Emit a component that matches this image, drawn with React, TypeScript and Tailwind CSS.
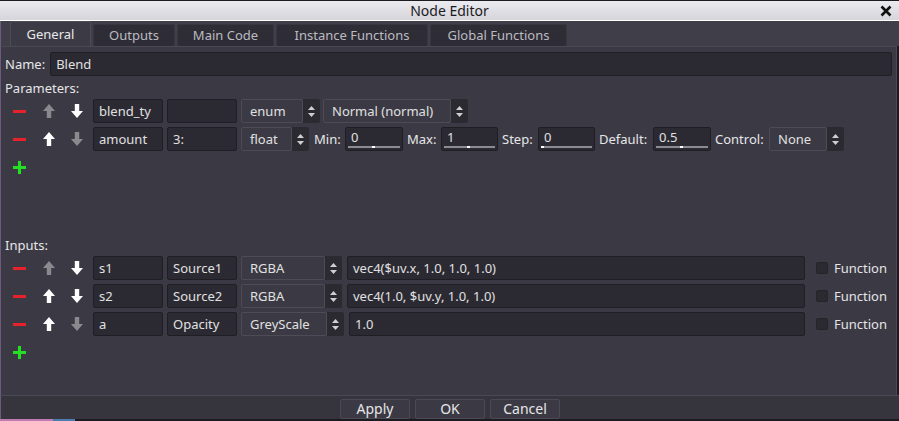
import React from 'react'

const FONT = { fontFamily: '"Noto Sans", "Open Sans", sans-serif' }

function Minus() {
  return (
    <div className="w-[28px] h-[24px] flex items-center justify-center">
      <div className="w-[13px] h-[3px] bg-[#e8222b]" />
    </div>
  )
}

function Plus() {
  return (
    <div className="w-[28px] h-[24px] flex items-center justify-center">
      <svg width="13" height="13" viewBox="0 0 13 13">
        <path d="M5 0h3v5h5v3H8v5H5V8H0V5h5z" fill="#22e022" />
      </svg>
    </div>
  )
}

function Arrow({ down, enabled }: { down?: boolean; enabled: boolean }) {
  return (
    <div className="w-[24px] h-[24px] flex items-center justify-center">
      <svg width="12" height="14" viewBox="0 0 12 14" style={{ transform: down ? 'rotate(180deg)' : undefined }}>
        <path d="M6 0L12 7H8.2V14H3.8V7H0Z" fill={enabled ? '#ffffff' : '#8a8a8e'} />
      </svg>
    </div>
  )
}

function Field({ w, children, grow }: { w?: number; children?: React.ReactNode; grow?: boolean }) {
  return (
    <div
      className={
        'h-[24px] bg-[#2b2a32] border border-[#1f1e25] rounded-[2px] pl-[5px] flex items-center text-[#e0e0e0] whitespace-nowrap overflow-hidden ' +
        (grow ? 'flex-1' : '')
      }
      style={w ? { width: w } : undefined}
    >
      {children}
    </div>
  )
}

function SpinIcon() {
  return (
    <svg width="7" height="11" viewBox="0 0 7 11">
      <path d="M3.5 0L7 4H0Z M0 7H7L3.5 11Z" fill="#cfcfd3" />
    </svg>
  )
}

function Select({ w, label, className }: { w: number; label: string; className?: string }) {
  return (
    <div className={'h-[24px] flex shrink-0 ' + (className ?? '')} style={{ width: w }}>
      <div className="flex-1 bg-[#3b3a44] border border-[#4d4c56] rounded-[2px] pl-[8px] flex items-center text-[#e0e0e0] whitespace-nowrap overflow-hidden">
        {label}
      </div>
      <div className="w-[17px] bg-[#2b2a31] rounded-r-[2px] flex items-center justify-center">
        <SpinIcon />
      </div>
    </div>
  )
}

function Spin({ w, value, tick }: { w: number; value: string; tick: number }) {
  return (
    <div
      className="relative h-[24px] shrink-0 bg-[#2b2a32] border border-[#1f1e25] rounded-[2px] pl-[5px] flex items-center text-[#e0e0e0]"
      style={{ width: w }}
    >
      <span className="-mt-[3px]">{value}</span>
      <div className="absolute left-[2px] right-[2px] bottom-[2px] h-[2px] bg-[#8c8b92]">
        <div className="absolute top-0 h-[2px] w-[3px] bg-white" style={{ left: `${tick}%` }} />
      </div>
    </div>
  )
}

function Label({ w, children }: { w: number; children: React.ReactNode }) {
  return (
    <span className="shrink-0 whitespace-nowrap" style={{ width: w }}>
      {children}
    </span>
  )
}

function Check() {
  return (
    <div className="flex items-center pl-[7px] pr-[5px]">
      <div className="w-[12px] h-[12px] bg-[#2b2a31] border border-[#25242b] rounded-[2px]" />
      <span className="ml-[6px] text-[#e4e4e4]">Function</span>
    </div>
  )
}

const TABS = [
  { name: 'General', w: 81 },
  { name: 'Outputs', w: 82 },
  { name: 'Main Code', w: 97 },
  { name: 'Instance Functions', w: 152 },
  { name: 'Global Functions', w: 137 },
]

const INPUTS = [
  { name: 's1', label: 'Source1', type: 'RGBA', sw: 101, expr: 'vec4($uv.x, 1.0, 1.0, 1.0)', up: false, down: true },
  { name: 's2', label: 'Source2', type: 'RGBA', sw: 101, expr: 'vec4(1.0, $uv.y, 1.0, 1.0)', up: true, down: true },
  { name: 'a', label: 'Opacity', type: 'GreyScale', sw: 103, expr: '1.0', up: true, down: false },
]

export default function App() {
  return (
    <div className="w-[899px] h-[421px] bg-[#1c1b22] flex flex-col overflow-hidden text-[13px] leading-none" style={FONT}>
      {/* title bar */}
      <div className="h-[20px] mt-[1px] bg-gradient-to-b from-[#ebeaef] to-[#d6d5db] border-b border-white flex items-center relative">
        <div className="flex-1 text-center text-[#1a1a1e] text-[14px]">Node Editor</div>
        <svg className="absolute right-[7px] top-[4px]" width="12" height="12" viewBox="0 0 12 12">
          <path d="M1.5 1.5L10.5 10.5M10.5 1.5L1.5 10.5" stroke="#111" strokeWidth="2.6" />
        </svg>
      </div>

      {/* tab bar */}
      <div className="h-[25px] bg-[#403f49] flex items-end pl-[9px] gap-[2px] border-l border-[#6e5a7e]">
        {TABS.map((t, i) =>
          i === 0 ? (
            <div
              key={t.name}
              className="h-[25px] bg-[#3c3b45] border border-b-0 border-[#4d4c56] rounded-t-[2px] flex items-center justify-center text-[#e8e8ea]"
              style={{ width: t.w }}
            >
              {t.name}
            </div>
          ) : (
            <div
              key={t.name}
              className="h-[22px] bg-[#2e2d35] border border-b-0 border-[#38373f] rounded-t-[2px] flex items-center justify-center text-[#bcbbc2]"
              style={{ width: t.w }}
            >
              {t.name}
            </div>
          )
        )}
      </div>

      {/* panel */}
      <div className="h-[349px] bg-[#3b3a44] border-t border-r border-[#4a4953] border-l border-l-[#6e5a7e] mr-[2px] pl-[4px] pr-[4px] pt-[5px] flex flex-col text-[#e6e6e8]">
        <div className="flex items-center gap-[5px]">
          <span>Name:</span>
          <Field grow>Blend</Field>
        </div>

        <div className="h-[16px] mt-[4px] flex items-center">Parameters:</div>

        <div className="mt-[3px] flex flex-col gap-[4px]">
          <div className="flex items-center gap-[4px]">
            <Minus />
            <Arrow enabled={false} />
            <Arrow down enabled />
            <Field w={70}>blend_ty</Field>
            <Field w={70} />
            <Select w={79} label="enum" />
            <Select w={145} label="Normal (normal)" className="-ml-[1px]" />
          </div>
          <div className="flex items-center gap-[4px]">
            <Minus />
            <Arrow enabled />
            <Arrow down enabled={false} />
            <Field w={70}>amount</Field>
            <Field w={70}>3:</Field>
            <Select w={68} label="float" />
            <Label w={28}>
              <span className="ml-[1px]">Min:</span>
            </Label>
            <Spin w={58} value="0" tick={46} />
            <Label w={30}>Max:</Label>
            <Spin w={57} value="1" tick={46} />
            <Label w={32}>Step:</Label>
            <Spin w={57} value="0" tick={0} />
            <Label w={50}>Default:</Label>
            <Spin w={58} value="0.5" tick={46} />
            <Label w={50}>Control:</Label>
            <Select w={75} label="None" />
          </div>
          <div className="flex items-center">
            <Plus />
          </div>
        </div>

        <div className="h-[16px] mt-[58px] flex items-center">Inputs:</div>

        <div className="mt-[3px] flex flex-col gap-[4px]">
          {INPUTS.map((r) => (
            <div key={r.name} className="flex items-center gap-[4px]">
              <Minus />
              <Arrow enabled={r.up} />
              <Arrow down enabled={r.down} />
              <Field w={70}>{r.name}</Field>
              <Field w={70}>{r.label}</Field>
              <Select w={r.sw} label={r.type} />
              <div className="flex-1 flex pl-[1px]">
                <Field grow>{r.expr}</Field>
              </div>
              <Check />
            </div>
          ))}
          <div className="flex items-center">
            <Plus />
          </div>
        </div>
      </div>

      {/* bottom bar */}
      <div className="h-[24px] bg-[#36353e] border-t border-[#4a4953] border-l border-l-[#6e5a7e] flex items-start justify-center gap-[5px] pt-[3px]">
        {['Apply', 'OK', 'Cancel'].map((b) => (
          <div
            key={b}
            className="w-[70px] h-[20px] bg-[#3b3a44] border border-[#4b4a54] rounded-[2px] flex items-center justify-center text-[#e6e6e8] text-[14px]"
          >
            {b}
          </div>
        ))}
      </div>
      <div className="flex-1 flex">
        <div className="w-[53px] bg-[#c07cb0]" />
        <div className="w-[22px] bg-[#4a7cb0]" />
      </div>
    </div>
  )
}
